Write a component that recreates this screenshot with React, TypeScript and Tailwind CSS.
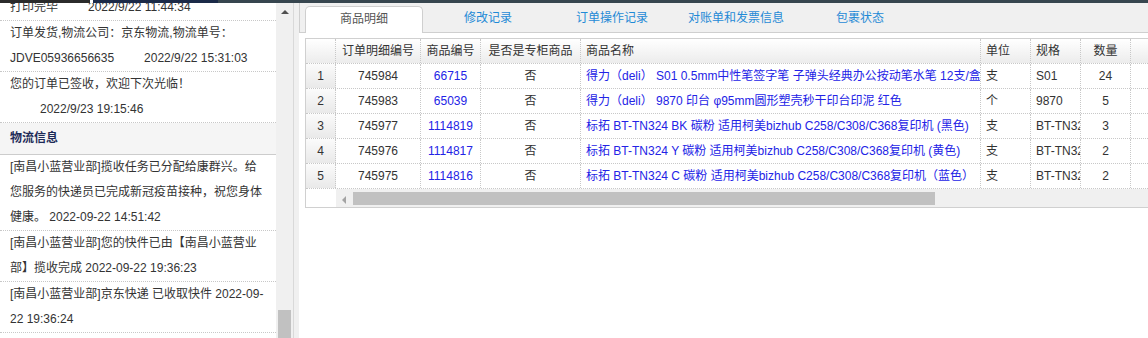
import React from "react";

type Row = {
  n: string;
  id: string;
  code: string;
  name: string;
  unit: string;
  spec: string;
  qty: string;
};

const rows: Row[] = [
  { n: "1", id: "745984", code: "66715", name: "得力（deli） S01 0.5mm中性笔签字笔 子弹头经典办公按动笔水笔 12支/盒", unit: "支", spec: "S01", qty: "24" },
  { n: "2", id: "745983", code: "65039", name: "得力（deli） 9870 印台 φ95mm圆形塑壳秒干印台印泥 红色", unit: "个", spec: "9870", qty: "5" },
  { n: "3", id: "745977", code: "1114819", name: "标拓 BT-TN324 BK 碳粉 适用柯美bizhub C258/C308/C368复印机 (黑色)", unit: "支", spec: "BT-TN324", qty: "3" },
  { n: "4", id: "745976", code: "1114817", name: "标拓 BT-TN324 Y 碳粉 适用柯美bizhub C258/C308/C368复印机 (黄色)", unit: "支", spec: "BT-TN324", qty: "2" },
  { n: "5", id: "745975", code: "1114816", name: "标拓 BT-TN324 C 碳粉 适用柯美bizhub C258/C308/C368复印机（蓝色）", unit: "支", spec: "BT-TN324", qty: "2" },
];

const cellBase =
  "h-full shrink-0 flex items-center overflow-hidden whitespace-nowrap border-r border-dotted border-[#c8c8c8]";

function Cell({ className, children }: { className: string; children?: React.ReactNode }) {
  return <div className={`${cellBase} ${className}`}>{children}</div>;
}

const tabs = ["商品明细", "修改记录", "订单操作记录", "对账单和发票信息", "包裹状态"];

export default function App() {
  return (
    <div className="w-[1148px] h-[338px] overflow-hidden bg-white text-[12px] text-[#333] flex flex-col font-['Liberation_Sans','Noto_Sans_CJK_SC',sans-serif]">
      {/* top bar */}
      <div className="flex h-[3px] shrink-0 relative z-10">
        <div className="w-[90px] bg-[#2b2b2b]" />
        <div className="w-[3px] bg-white" />
        <div className="w-[125px] bg-[#1b2a48]" />
        <div className="flex-1 bg-[#37464f]" />
      </div>

      <div className="flex h-[335px]">
        {/* left panel */}
        <div className="w-[276px] shrink-0 overflow-hidden bg-white leading-[25px]">
          <div className="mt-[-8px]">
            <div className="px-[10px] border-b border-dotted border-[#c8c8c8]">
              打印完毕<span className="inline-block ml-[30px]">2022/9/22 11:44:34</span>
            </div>
            <div className="px-[10px] border-b border-dotted border-[#c8c8c8]">
              订单发货,物流公司：京东物流,物流单号：<wbr />JDVE05936656635
              <span className="inline-block ml-[30px]">2022/9/22 15:31:03</span>
            </div>
            <div className="px-[10px] border-b border-dotted border-[#c8c8c8]">
              您的订单已签收，欢迎下次光临！<span className="inline-block ml-[30px]">2022/9/23 19:15:46</span>
            </div>
          </div>
          <div className="h-[32px] bg-[#f5f5f5] border-b border-[#cccccc] px-[10px] leading-[31px] font-bold text-[#1e2b58]">
            物流信息
          </div>
          <div>
            <div className="px-[10px] border-b border-dotted border-[#c8c8c8]">
              [南昌小蓝营业部]揽收任务已分配给康群兴。给您服务的快递员已完成新冠疫苗接种，祝您身体健康。 2022-09-22 14:51:42
            </div>
            <div className="px-[10px] border-b border-dotted border-[#c8c8c8]">
              [南昌小蓝营业部]您的快件已由【南昌小蓝营业部】揽收完成 2022-09-22 19:36:23
            </div>
            <div className="px-[10px] border-b border-dotted border-[#c8c8c8]">
              [南昌小蓝营业部]京东快递 已收取快件 2022-09-<wbr />22 19:36:24
            </div>
          </div>
        </div>

        {/* vertical scrollbar */}
        <div className="w-[17px] shrink-0 bg-[#f0f0f0] flex flex-col">
          <div className="mt-[7px] mx-auto w-0 h-0 border-l-[4px] border-r-[4px] border-b-[4px] border-l-transparent border-r-transparent border-b-[#505050]" />
          <div className="mt-auto ml-[2px] w-[13px] h-[28px] bg-[#c1c1c1]" />
        </div>
        <div className="w-[1px] shrink-0 bg-[#d9d9d9]" />
        <div className="w-[5px] shrink-0 bg-[#f0f0f0]" />

        {/* right panel */}
        <div className="flex-1 overflow-hidden flex flex-col bg-white">
          <div className="h-[30px] shrink-0 bg-[#f0f0f0] border-l border-b border-[#cfcfcf] flex items-end pl-[5px] gap-[6px]">
            {tabs.map((t, i) =>
              i === 0 ? (
                <div
                  key={t}
                  className="w-[118px] h-[27px] mb-[-1px] shrink-0 flex items-center justify-center pb-[3px] bg-white border border-b-0 border-[#cfcfcf] rounded-t-[5px] text-[#555]"
                >
                  {t}
                </div>
              ) : (
                <div
                  key={t}
                  className="w-[118px] h-[27px] mb-[-1px] shrink-0 flex items-center justify-center pb-[3px] border border-transparent text-[#1f8ad6]"
                >
                  {t}
                </div>
              )
            )}
          </div>

          {/* table */}
          <div className="ml-[6px] mt-[5px] w-[1000px] shrink-0 border border-[#d0d0d0] flex flex-col">
            {/* header */}
            <div className="h-[25px] flex border-b border-dotted border-[#c8c8c8] bg-linear-to-b from-[#ffffff] to-[#ececec]">
              <Cell className="w-[30px]" />
              <Cell className="w-[85px] justify-center">订单明细编号</Cell>
              <Cell className="w-[60px] justify-center">商品编号</Cell>
              <Cell className="w-[100px] justify-center">是否是专柜商品</Cell>
              <Cell className="w-[400px] pl-[5px]">商品名称</Cell>
              <Cell className="w-[50px] pl-[5px]">单位</Cell>
              <Cell className="w-[50px] pl-[5px]">规格</Cell>
              <Cell className="w-[50px] justify-center">数量</Cell>
              <Cell className="w-[80px]" />
            </div>
            {rows.map((r) => (
              <div key={r.n} className="h-[25px] flex border-b border-dotted border-[#c8c8c8]">
                <Cell className="w-[30px] justify-center bg-linear-to-b from-[#fbfbfb] to-[#e9e9e9]">{r.n}</Cell>
                <Cell className="w-[85px] justify-center">{r.id}</Cell>
                <Cell className="w-[60px] justify-center text-[#2323e6]">{r.code}</Cell>
                <Cell className="w-[100px] justify-center">否</Cell>
                <Cell className="w-[400px] pl-[5px] text-[#2323e6]">{r.name}</Cell>
                <Cell className="w-[50px] pl-[5px]">{r.unit}</Cell>
                <Cell className="w-[50px] pl-[5px]">{r.spec}</Cell>
                <Cell className="w-[50px] justify-center">{r.qty}</Cell>
                <Cell className="w-[80px]" />
              </div>
            ))}
            {/* horizontal scrollbar */}
            <div className="h-[18px] flex">
              <div className="w-[30px] shrink-0 bg-white" />
              <div className="flex-1 bg-[#f0f0f0] flex items-start pt-[3px]">
                <div className="self-center ml-[6px] w-0 h-0 border-t-[4px] border-b-[4px] border-r-[4px] border-t-transparent border-b-transparent border-r-[#a3a3a3]" />
                <div className="ml-[7px] w-[582px] h-[13px] bg-[#c1c1c1]" />
              </div>
            </div>
          </div>
        </div>
      </div>
    </div>
  );
}
